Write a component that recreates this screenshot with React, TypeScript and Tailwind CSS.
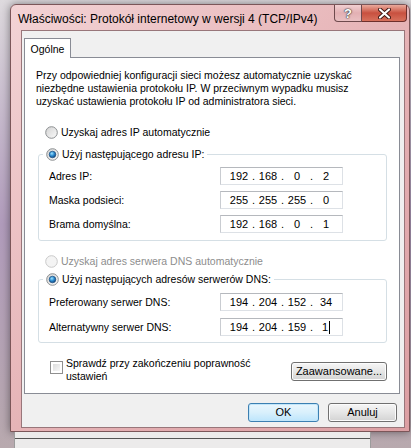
import React from "react";

function Radio({ checked = false, disabled = false }: { checked?: boolean; disabled?: boolean }) {
  return (
    <svg width="13" height="13" viewBox="0 0 13 13" className="shrink-0">
      <defs>
        <linearGradient id="rfill" x1="0" y1="0" x2="1" y2="1">
          <stop offset="0" stopColor="#d2d2d2" />
          <stop offset="1" stopColor="#fbfbfb" />
        </linearGradient>
        <radialGradient id="rdot" cx="0.4" cy="0.35" r="0.7">
          <stop offset="0" stopColor="#9fe3ff" />
          <stop offset="0.5" stopColor="#2b8bd0" />
          <stop offset="1" stopColor="#0d3f75" />
        </radialGradient>
      </defs>
      <circle
        cx="6.5"
        cy="6.5"
        r="5.8"
        fill={disabled ? "#f4f4f4" : "url(#rfill)"}
        stroke={disabled ? "#c9c9c9" : "#8c8f91"}
        strokeWidth="1"
      />
      {checked && <circle cx="6.5" cy="6.5" r="3.3" fill="url(#rdot)" stroke="#1b4d80" strokeWidth="0.7" />}
    </svg>
  );
}

function IpField({ parts, cursor = false }: { parts: string[]; cursor?: boolean }) {
  return (
    <div className="w-[123px] h-[18px] flex items-center pl-[7px] bg-white border border-[#dde1e6] border-t-[#b5b8bd] border-l-[#c9ccd1] text-[11px] leading-[13px] text-black">
      {parts.map((p, i) => (
        <React.Fragment key={i}>
          <span className="w-[22px] text-center flex justify-center items-center">
            {p}
            {cursor && i === 3 && <span className="inline-block w-[1px] h-[13px] bg-black ml-[1px]" />}
          </span>
          {i < 3 && <span className="w-[7px] text-center">.</span>}
        </React.Fragment>
      ))}
    </div>
  );
}

function FieldRow({ label, parts, cursor }: { label: string; parts: string[]; cursor?: boolean }) {
  return (
    <div className="flex items-center h-[18px]">
      <span className="w-[171px]">{label}</span>
      <IpField parts={parts} cursor={cursor} />
    </div>
  );
}

function WinButton({ children, focused = false, className = "" }: { children: React.ReactNode; focused?: boolean; className?: string }) {
  return (
    <div
      className={
        "h-[19px] flex items-center justify-center rounded-[3px] border text-[11px] text-black " +
        (focused
          ? "border-[#3c7fb1] bg-gradient-to-b from-[#eaf6fd] via-[#d9f0fc] to-[#bde5fc] shadow-[inset_0_0_0_1px_#c2e6fa]"
          : "border-[#707070] bg-gradient-to-b from-[#f6f6f6] via-[#e6e6e6] to-[#d3d3d3] shadow-[inset_0_0_0_1px_#fcfcfc]") +
        " " +
        className
      }
    >
      {children}
    </div>
  );
}

export default function App() {
  return (
    <div className="w-[411px] h-[448px] overflow-hidden flex flex-col bg-gradient-to-b from-[#dedade] via-[#b19cbc] to-[#b8a9ae] font-['Liberation_Sans',Arial,sans-serif] text-[10.5px] leading-[13px] text-black">
      <div className="pt-[4px] pl-[10px]">
        {/* window frame */}
        <div className="w-[400px] h-[428px] rounded-t-[6px] border border-[#7b5659] bg-gradient-to-br from-[#f3d3d5] via-[#e6b4b7] to-[#dc9fa3] flex flex-col shadow-[0_0_8px_rgba(0,0,0,0.45)]">
          {/* title bar */}
          <div className="h-[25px] flex items-start">
            <span className="pl-[7px] pt-[7px] text-[12px] leading-[14px] text-black whitespace-nowrap">
              Właściwości: Protokół internetowy w wersji 4 (TCP/IPv4)
            </span>
            <div className="ml-auto mr-[2px] flex">
              <div className="w-[28px] h-[17px] rounded-bl-[4px] border border-t-0 border-[#6e4a4d] bg-gradient-to-b from-[#f1cfd1] via-[#e3b0b3] to-[#e9c0c2] flex items-center justify-center">
                <span className="text-[13px] leading-[13px] font-bold text-white [text-shadow:0_0_1px_#333,0_0_1px_#333,0_0_2px_#555]">?</span>
              </div>
              <div className="w-[45px] h-[17px] rounded-br-[4px] border border-t-0 border-l-0 border-[#6e2f2c] bg-gradient-to-b from-[#e9a99c] via-[#c8503f] to-[#d7705c] flex items-center justify-center">
                <svg width="13" height="11" viewBox="0 0 13 11">
                  <path d="M2 1.5 L11 9.5 M11 1.5 L2 9.5" stroke="#3a1410" strokeWidth="4" strokeLinecap="round" />
                  <path d="M2 1.5 L11 9.5 M11 1.5 L2 9.5" stroke="#ffffff" strokeWidth="2.2" strokeLinecap="round" />
                </svg>
              </div>
            </div>
          </div>

          {/* client area */}
          <div className="ml-[10px] w-[384px] h-[398px] border border-[#98767a] bg-[#f0f0f0] flex flex-col">
            {/* tab strip */}
            <div className="mt-[7px] ml-[2px] flex">
              <div className="relative z-10 -mb-[1px] w-[47px] h-[20px] border border-b-0 border-[#898c95] bg-white text-center pt-[4px]">
                Ogólne
              </div>
            </div>

            {/* tab panel */}
            <div className="ml-[2px] w-[376px] h-[337px] border border-[#898c95] bg-white flex flex-col">
              <p className="pt-[11px] pl-[11px]">
                Przy odpowiedniej konfiguracji sieci możesz automatycznie uzyskać
                <br />
                niezbędne ustawienia protokołu IP. W przeciwnym wypadku musisz
                <br />
                uzyskać ustawienia protokołu IP od administratora sieci.
              </p>

              <div className="mt-[18px] ml-[20px] flex items-center gap-[3px] h-[13px]">
                <Radio />
                <span>Uzyskaj adres IP automatycznie</span>
              </div>

              <fieldset className="mt-[9px] ml-[13px] w-[349px] border border-[#d5dfe5] rounded-[3px] pl-[4px] pt-[6px] pb-[7px]">
                <legend className="px-[3px] h-[13px]">
                  <span className="flex items-center gap-[3px]">
                    <Radio checked />
                    <span>Użyj następującego adresu IP:</span>
                  </span>
                </legend>
                <div className="pl-[6px] flex flex-col gap-[6px]">
                  <FieldRow label="Adres IP:" parts={["192", "168", "0", "2"]} />
                  <FieldRow label="Maska podsieci:" parts={["255", "255", "255", "0"]} />
                  <FieldRow label="Brama domyślna:" parts={["192", "168", "0", "1"]} />
                </div>
              </fieldset>

              <div className="mt-[14px] ml-[20px] flex items-center gap-[3px] h-[13px] text-[#8d8d8d]">
                <Radio disabled />
                <span>Uzyskaj adres serwera DNS automatycznie</span>
              </div>

              <fieldset className="mt-[5px] ml-[13px] w-[349px] border border-[#d5dfe5] rounded-[3px] pl-[4px] pt-[7px] pb-[6px]">
                <legend className="px-[3px] h-[13px]">
                  <span className="flex items-center gap-[3px]">
                    <Radio checked />
                    <span>Użyj następujących adresów serwerów DNS:</span>
                  </span>
                </legend>
                <div className="pl-[6px] flex flex-col gap-[7px]">
                  <FieldRow label="Preferowany serwer DNS:" parts={["194", "204", "152", "34"]} />
                  <FieldRow label="Alternatywny serwer DNS:" parts={["194", "204", "159", "1"]} cursor />
                </div>
              </fieldset>

              <div className="mt-[14px] flex items-start">
                <div className="ml-[25px] mt-[4px] w-[13px] h-[13px] border border-[#8f8f8f] bg-white p-[2px]">
                  <div className="w-full h-full bg-gradient-to-br from-[#dcdcdc] to-[#f7f7f7]" />
                </div>
                <span className="ml-[3px]">
                  Sprawdź przy zakończeniu poprawność
                  <br />
                  ustawień
                </span>
                <WinButton className="ml-auto mr-[12px] mt-[5px] w-[96px]">Zaawansowane...</WinButton>
              </div>
            </div>

            {/* dialog buttons */}
            <div className="mt-[9px] flex justify-end gap-[9px] pr-[7px]">
              <WinButton focused className="w-[71px]">
                OK
              </WinButton>
              <WinButton className="w-[69px]">Anuluj</WinButton>
            </div>
          </div>
        </div>
      </div>

      {/* window behind, at the bottom */}
      <div className="flex-1 ml-[14px] mr-[40px] bg-[#ecebeb] border-l border-r border-[#9c9c9c]">
        <div className="mt-[6px] h-[1px] bg-[#555]" />
      </div>
    </div>
  );
}
